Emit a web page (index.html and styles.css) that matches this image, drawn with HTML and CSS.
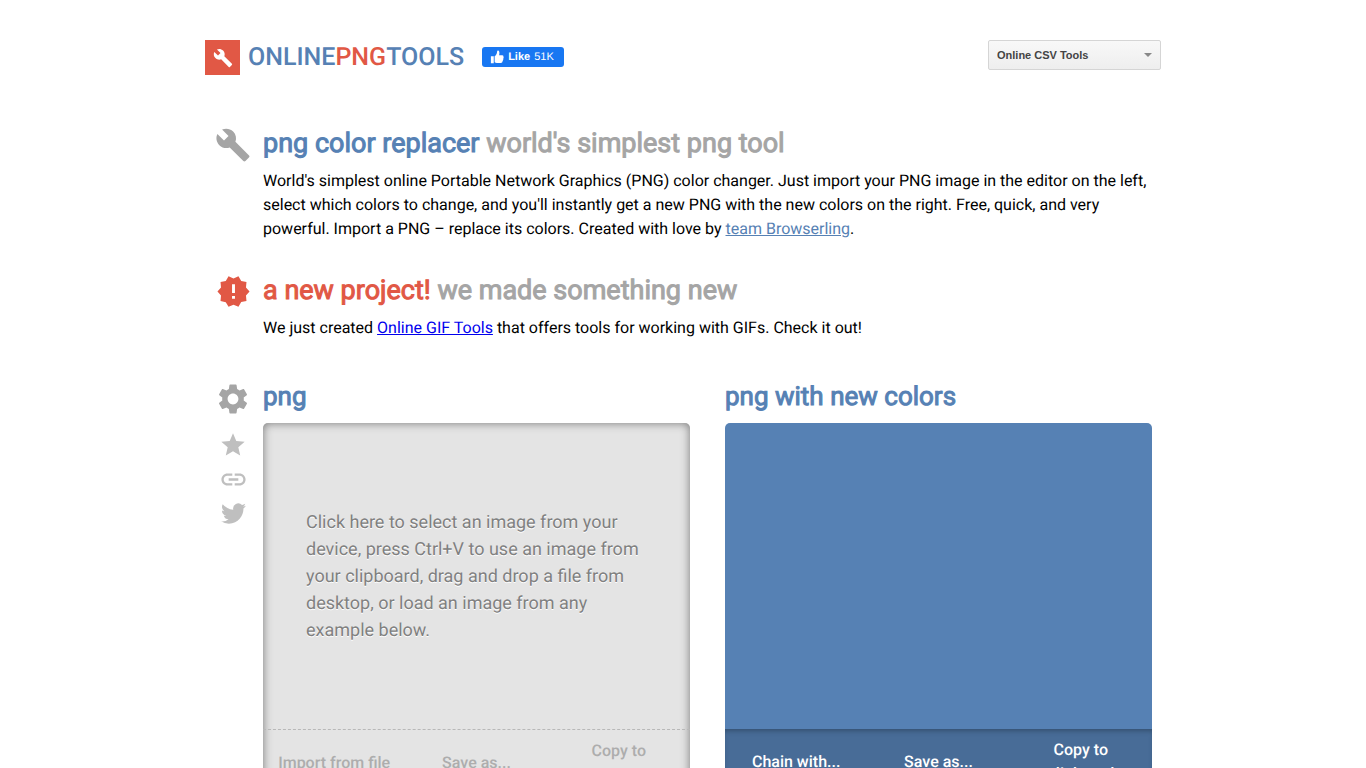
FILE: index.html
```html
<!DOCTYPE html>
<html lang="en">
<head>
<meta charset="utf-8">
<title>PNG Color Replacer</title>
<link rel="stylesheet" href="styles.css">
</head>
<body>
<div class="page">
  <header class="header">
    <a class="logo" href="#">
      <span class="logo-mark"><svg viewBox="0 0 24 24" width="20" height="20" aria-hidden="true"><path d="M22.7 19l-9.1-9.1c.9-2.3.4-5-1.5-6.900-2-2-5-2.400-7.400-1.300L9 6 6 9 1.600 4.700C.4 7.100.9 10.100 2.900 12.100c1.900 1.900 4.600 2.400 6.900 1.500l9.100 9.100c.4.4 1 .4 1.400 0l2.300-2.300c.5-.4.5-1.100.1-1.400z"/></svg></span>
      <span class="logo-text">ONLINE<span class="accent">PNG</span>TOOLS</span>
    </a>
    <button class="like" type="button">
      <svg viewBox="0 0 16 16" width="14" height="14" aria-hidden="true"><path d="M1 7h3.300v8H1zM5.300 7.200C7 6 8 4 8.200 1.300 8.300.5 9 .3 9.600.7c1.400 1 1.400 3 .8 5.300h3.700c1 0 1.600.9 1.200 1.800.5.600.4 1.400-.1 1.900.3.700.1 1.400-.4 1.800.2.700-.1 1.300-.6 1.700.1 1-.7 1.600-1.700 1.600H8c-1.200 0-2-.4-2.700-.8z"/></svg>
      <strong>Like</strong><span>51K</span>
    </button>
    <div class="switcher">
      <select class="switcher-select" aria-label="Choose a tools site">
        <option>Online CSV Tools</option>
        <option>Online PNG Tools</option>
        <option>Online GIF Tools</option>
      </select>
    </div>
  </header>

  <main>
    <section class="section intro">
      <div class="rail"><svg class="icon" viewBox="0 0 24 24" width="36" height="36" aria-hidden="true"><path d="M22.700 19l-9.100-9.100c.9-2.300.4-5-1.500-6.900-2-2-5-2.400-7.400-1.300L9 6 6 9 1.600 4.700C.4 7.100.9 10.100 2.900 12.100c1.900 1.900 4.600 2.400 6.900 1.500l9.100 9.100c.4.4 1 .4 1.400 0l2.300-2.300c.5-.4.5-1.100.1-1.400z"/></svg></div>
      <div class="body">
        <h1 class="title">png color replacer <span class="muted">world's simplest png tool</span></h1>
        <p class="text">World's simplest online Portable Network Graphics (PNG) color changer. Just import your PNG image in the editor on the left, select which colors to change, and you'll instantly get a new PNG with the new colors on the right. Free, quick, and very powerful. Import a PNG – replace its colors. Created with love by <a class="team-link" href="#">team Browserling</a>.</p>
      </div>
    </section>

    <section class="section news">
      <div class="rail"><svg class="icon red" viewBox="0 0 24 24" width="35" height="35" aria-hidden="true"><path d="M23 12l-2.440-2.780.34-3.680-3.610-.82-1.890-3.180L12 3 8.600 1.540 6.710 4.720l-3.610.81.34 3.680L1 12l2.440 2.780-.34 3.690 3.610.82 1.890 3.180L12 21l3.400 1.460 1.890-3.180 3.610-.82-.34-3.680L23 12zm-10 5h-2v-2h2v2zm0-4h-2V7h2v6z"/></svg></div>
      <div class="body">
        <h2 class="title red">a new project! <span class="muted">we made something new</span></h2>
        <p class="text">We just created <a class="gif-link" href="#">Online GIF Tools</a> that offers tools for working with GIFs. Check it out!</p>
      </div>
    </section>

    <section class="section">
      <div class="rail">
        <button class="rail-button settings" type="button" aria-label="Settings"><svg class="icon" viewBox="0 0 24 24" width="36" height="36"><path d="M19.140 12.940c.04-.3.060-.61.060-.94 0-.32-.02-.64-.07-.94l2.030-1.580c.18-.14.23-.41.12-.61l-1.920-3.320c-.12-.22-.37-.29-.59-.22l-2.390.96c-.5-.38-1.030-.7-1.620-.94l-.36-2.540c-.04-.24-.24-.41-.48-.41h-3.840c-.24 0-.43.17-.47.41l-.36 2.540c-.59.24-1.130.57-1.620.94l-2.390-.96c-.22-.08-.47 0-.59.22L2.740 8.870c-.12.21-.08.47.12.61l2.030 1.580c-.05.3-.09.63-.09.94s.02.64.07.94l-2.030 1.580c-.18.14-.23.41-.12.61l1.920 3.320c.12.22.37.29.59.22l2.390-.96c.5.38 1.030.7 1.620.94l.36 2.540c.05.24.24.41.48.41h3.840c.24 0 .44-.17.47-.41l.36-2.540c.59-.24 1.130-.56 1.620-.94l2.390.96c.22.08.47 0 .59-.22l1.920-3.320c.12-.22.07-.47-.12-.61l-2.010-1.580zM12 15.600c-1.980 0-3.600-1.620-3.600-3.600s1.620-3.600 3.600-3.600 3.600 1.620 3.600 3.600-1.620 3.600-3.600 3.600z"/></svg></button>
        <button class="rail-button" type="button" aria-label="Add to favorites"><svg class="icon light" viewBox="0 0 24 24" width="28" height="28"><path d="M12 17.270L18.180 21l-1.640-7.030L22 9.240l-7.190-.61L12 2 9.190 8.630 2 9.240l5.460 4.730L5.820 21z"/></svg></button>
        <button class="rail-button" type="button" aria-label="Copy link"><svg class="icon light" viewBox="0 0 24 24" width="29" height="29"><path d="M3.900 12c0-1.710 1.390-3.100 3.100-3.100h4V7H7c-2.760 0-5 2.240-5 5s2.240 5 5 5h4v-1.900H7c-1.710 0-3.100-1.390-3.100-3.100zM8 13h8v-2H8v2zm9-6h-4v1.900h4c1.710 0 3.100 1.390 3.100 3.100s-1.390 3.100-3.100 3.100h-4V17h4c2.760 0 5-2.240 5-5s-2.240-5-5-5z"/></svg></button>
        <button class="rail-button" type="button" aria-label="Share on Twitter"><svg class="icon light" viewBox="0 0 24 24" width="25" height="25"><path d="M23.950 4.570a10 10 0 0 1-2.820.78 4.960 4.960 0 0 0 2.160-2.720 9.900 9.900 0 0 1-3.120 1.190 4.920 4.920 0 0 0-8.380 4.480A13.930 13.930 0 0 1 1.640 3.160a4.920 4.920 0 0 0 1.520 6.570 4.900 4.900 0 0 1-2.230-.61v.06a4.920 4.920 0 0 0 3.950 4.830 5 5 0 0 1-2.210.08 4.940 4.940 0 0 0 4.600 3.420A9.870 9.870 0 0 1 0 19.540a13.990 13.990 0 0 0 7.550 2.210c9.050 0 14-7.500 14-13.980 0-.21 0-.42-.02-.63a9.940 9.940 0 0 0 2.420-2.570z"/></svg></button>
      </div>
      <div class="body panels">
        <div>
          <h2 class="title panel-title">png</h2>
          <div class="panel input-panel">
            <button class="drop" type="button">Click here to select an image from your device, press Ctrl+V to use an image from your clipboard, drag and drop a file from desktop, or load an image from any example below.</button>
            <div class="actions">
              <button class="action" type="button">Import from file</button>
              <button class="action" type="button">Save as...</button>
              <button class="action" type="button">Copy to clipboard</button>
            </div>
          </div>
        </div>
        <div>
          <h2 class="title panel-title">png with new colors</h2>
          <div class="panel output-panel">
            <div class="preview"></div>
            <div class="actions">
              <button class="action" type="button">Chain with...</button>
              <button class="action" type="button">Save as...</button>
              <button class="action" type="button">Copy to clipboard</button>
            </div>
          </div>
        </div>
      </div>
    </section>
  </main>
</div>
</body>
</html>
```
FILE: styles.css
```css
* { box-sizing: border-box; }
body {
  margin: 0;
  background: #fff;
  color: #000;
  font: 16px/24px Roboto, "Liberation Sans", sans-serif;
  text-rendering: geometricPrecision;
}
button {
  border: 0;
  padding: 0;
  background: none;
  color: inherit;
  font: inherit;
  text-rendering: inherit;
  cursor: pointer;
}
h1, h2, p { margin: 0; }
svg { display: block; fill: currentColor; }

.page { max-width: 956px; margin: 0 auto; padding: 40px 0; }

.header { display: flex; align-items: flex-start; margin-bottom: 50px; }
.logo { display: flex; align-items: center; gap: 8px; color: #5681b4; text-decoration: none; }
.logo-mark {
  display: flex;
  align-items: center;
  justify-content: center;
  width: 35px;
  height: 35px;
  background: #e15845;
  color: #fff;
}
.logo-text { font-size: 25px; font-weight: 500; line-height: 35px; }
.accent, .red { color: #e15845; }
.like {
  display: flex;
  align-items: center;
  gap: 4px;
  height: 20px;
  margin: 7px 0 0 18px;
  padding: 0 10px 0 8px;
  border-radius: 3px;
  background: #1877f2;
  color: #fff;
  font: 11px/20px "Liberation Sans", Arial, sans-serif;
}
.switcher { position: relative; width: 173px; margin-left: auto; }
.switcher::after {
  content: "";
  position: absolute;
  top: 13px;
  right: 9px;
  border: 4px solid transparent;
  border-top-color: #888;
  border-bottom: 0;
  pointer-events: none;
}
.switcher-select {
  display: block;
  appearance: none;
  width: 100%;
  height: 30px;
  padding: 0 24px 0 8px;
  border: 1px solid #d5d5d5;
  border-radius: 2px;
  background: linear-gradient(#f8f8f8, #eee);
  color: #444;
  font: bold 11px "Liberation Sans", Arial, sans-serif;
}

.section { display: flex; gap: 12px; padding: 0 9px 0 10px; }
.intro { margin-bottom: 31px; }
.news { margin-bottom: 39px; }
.rail { flex: 0 0 36px; display: flex; flex-direction: column; align-items: center; }
.intro .rail, .news .rail { padding-top: 2px; }
.rail-button { display: flex; align-items: center; justify-content: center; width: 36px; height: 34px; }
.settings { height: 40px; margin-bottom: 9px; }
.icon { flex: none; color: #a5a5a5; }
.icon.light { color: #bfbfbf; }
.icon.red { color: #e15845; }
.body { flex: 1; min-width: 0; }
.title {
  margin-bottom: 8px;
  color: #5681b4;
  font-size: 27px;
  font-weight: 400;
  line-height: 36px;
  -webkit-text-stroke: 1px currentColor;
}
.title.red { color: #e15845; }
.panel-title { font-size: 26px; }
.muted { color: #a5a5a5; }
.team-link { color: #5681b4; }
.gif-link { color: #00e; }

.panels { display: grid; grid-template-columns: 1fr 1fr; gap: 35px; }
.panel { border-radius: 5px; overflow: hidden; }
.input-panel { background: #e4e4e4; box-shadow: inset 0 0 10px #777; }
.drop {
  display: flex;
  align-items: center;
  width: 100%;
  height: 306px;
  padding: 0 43px;
  color: #808080;
  font-size: 18px;
  line-height: 27px;
  text-align: left;
  text-shadow: 0 1px 0 #fff;
}
.actions { display: grid; grid-template-columns: repeat(3, 1fr); padding: 9px 0; }
.action { min-height: 48px; padding: 0 10px; -webkit-text-stroke: 1px currentColor; }
.action:last-child { padding: 0 30px; }
.input-panel .actions { border-top: 1px dashed #b8b8b8; color: #adadad; text-shadow: 0 1px 0 #fff; }
.input-panel .action, .output-panel .action { -webkit-text-stroke-width: 0; font-weight: 500; }
.output-panel { background: #5681b4; }
.preview { height: 306px; }
.output-panel .actions {
  background: #486c97;
  box-shadow: inset 0 4px 5px -2px #34506f;
  color: #fff;
  text-shadow: 0 1px 1px #000;
}
```
